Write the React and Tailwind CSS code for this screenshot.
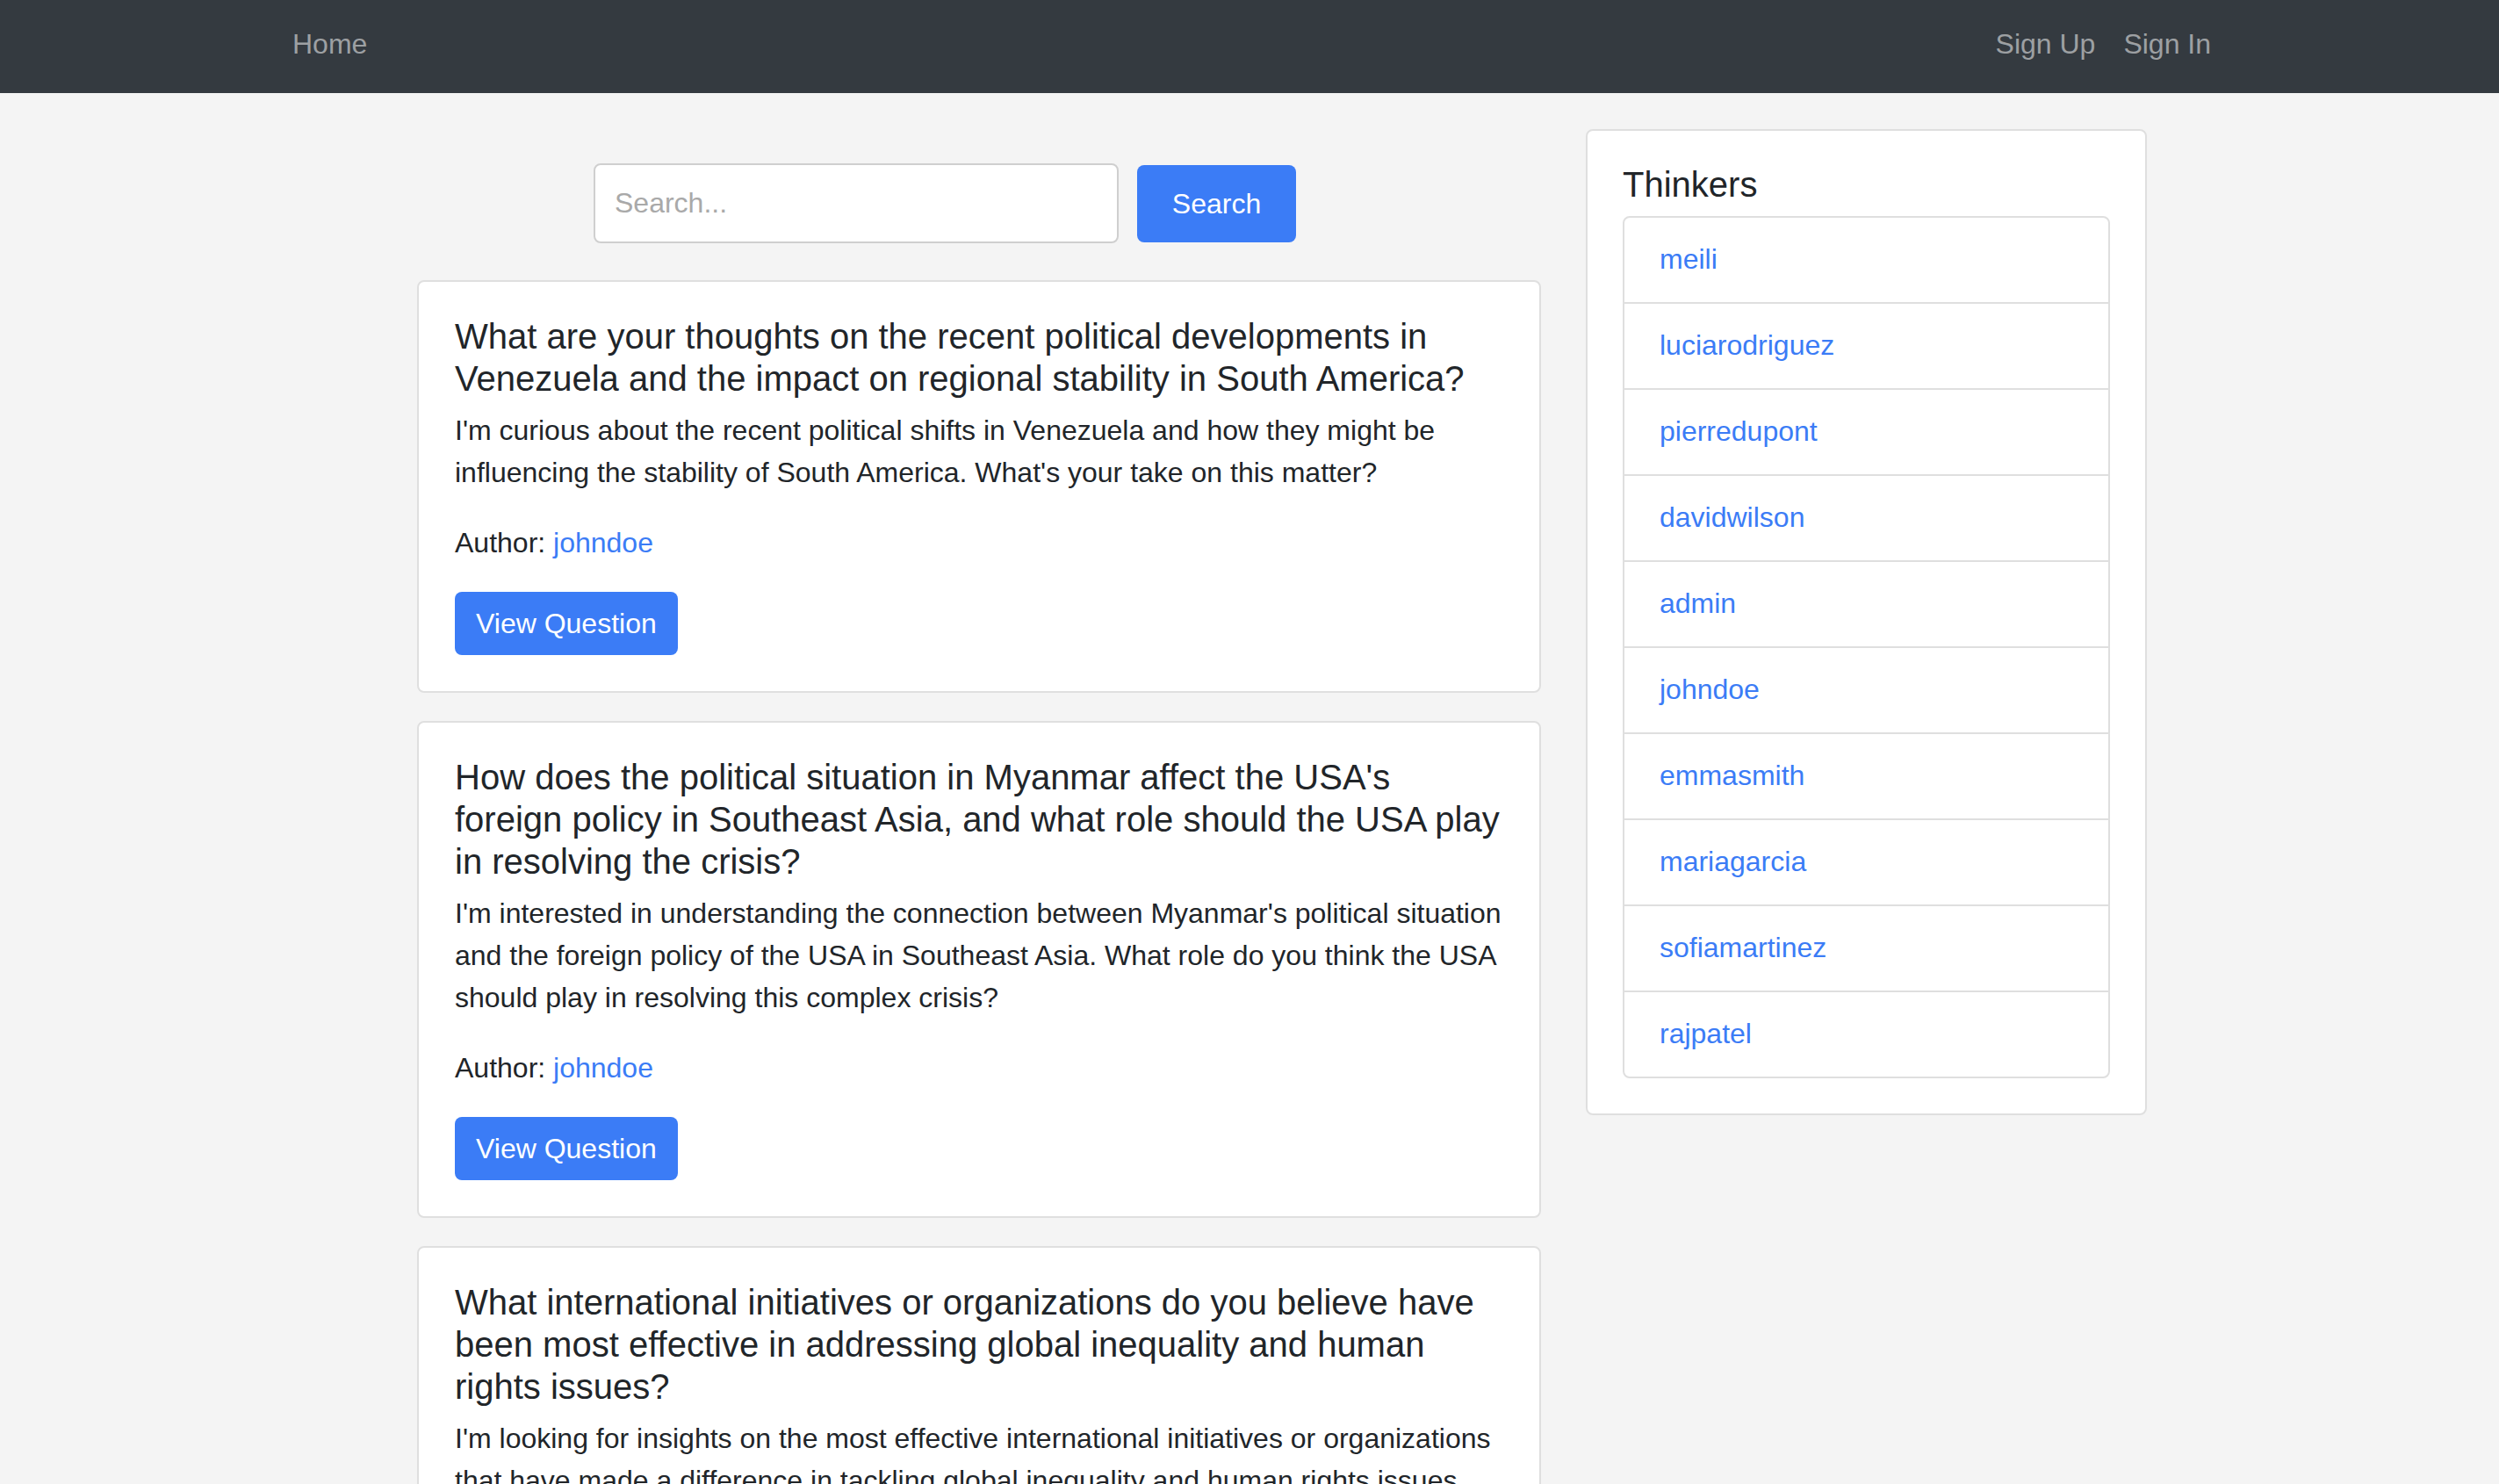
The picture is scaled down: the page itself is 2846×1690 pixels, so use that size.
import React from 'react';

const questions = [
    {
        id: 1,
        title: 'What are your thoughts on the recent political developments in Venezuela and the impact on regional stability in South America?',
        body: "I'm curious about the recent political shifts in Venezuela and how they might be influencing the stability of South America. What's your take on this matter?",
        author: 'johndoe',
    },
    {
        id: 2,
        title: "How does the political situation in Myanmar affect the USA's foreign policy in Southeast Asia, and what role should the USA play in resolving the crisis?",
        body: "I'm interested in understanding the connection between Myanmar's political situation and the foreign policy of the USA in Southeast Asia. What role do you think the USA should play in resolving this complex crisis?",
        author: 'johndoe',
    },
    {
        id: 3,
        title: 'What international initiatives or organizations do you believe have been most effective in addressing global inequality and human rights issues?',
        body: "I'm looking for insights on the most effective international initiatives or organizations that have made a difference in tackling global inequality and human rights issues. Which ones do you think have had the greatest impact?",
        author: 'johndoe',
    },
];

const thinkers = [
    'meili',
    'luciarodriguez',
    'pierredupont',
    'davidwilson',
    'admin',
    'johndoe',
    'emmasmith',
    'mariagarcia',
    'sofiamartinez',
    'rajpatel',
];

const QuestionCard = ({ q }) => (
    <div className="mb-[32px] rounded-[8px] border-2 border-[#dfdfdf] bg-white pb-[41px] pl-[41px] pr-[40px] pt-[38px]">
        <h5 className="mb-[11px] text-[40px] leading-[48px]">{q.title}</h5>
        <p className="mb-[32px] text-[32px] leading-[48px]">{q.body}</p>
        <p className="mb-[32px] text-[32px] leading-[48px]">
            Author: <a href="#" className="text-[#3b7cf6]">{q.author}</a>
        </p>
        <button className="h-[72px] rounded-[8px] bg-[#3b7cf6] px-[24px] text-[32px] leading-[48px] text-white">
            View Question
        </button>
    </div>
);

export default function App() {
    return (
        <div className="min-h-screen bg-[#f4f4f4] font-['Liberation_Sans',Arial,sans-serif] text-[#212529]">
            <nav className="flex h-[106px] items-center justify-between bg-[#343a40] pb-[6px] pl-[317px] pr-[312px]">
                <a href="#" className="px-[16px] text-[32px] leading-[48px] text-[#9da0a3]">Home</a>
                <div className="flex">
                    <a href="#" className="px-[16px] text-[32px] leading-[48px] text-[#9da0a3]">Sign Up</a>
                    <a href="#" className="px-[16px] text-[32px] leading-[48px] text-[#9da0a3]">Sign In</a>
                </div>
            </nav>

            <main className="flex items-start gap-[51px] pl-[475px] pt-[41px]">
                <div className="w-[1280px]">
                    <form className="mb-[42px] ml-[201px] mt-[39px] flex items-center gap-[21px]" onSubmit={(e) => e.preventDefault()}>
                        <input
                            type="text"
                            placeholder="Search..."
                            className="h-[91px] w-[598px] rounded-[8px] border-2 border-[#cfcfcf] bg-white px-[22px] text-[32px] outline-none placeholder:text-[#a9a9a9]"
                        />
                        <button className="h-[88px] w-[181px] rounded-[8px] bg-[#3b7cf6] text-[32px] text-white">
                            Search
                        </button>
                    </form>

                    {questions.map((q) => (
                        <QuestionCard key={q.id} q={q} />
                    ))}
                </div>

                <aside className="w-[639px] rounded-[8px] border-2 border-[#dfdfdf] bg-white px-[40px] pb-[40px] pt-[37px]">
                    <h5 className="mb-[12px] text-[40px] leading-[48px]">Thinkers</h5>
                    <ul className="divide-y-2 divide-[#dfdfdf] rounded-[8px] border-2 border-[#dfdfdf]">
                        {thinkers.map((name) => (
                            <li key={name} className="px-[40px] pb-[25px] pt-[23px] text-[32px] leading-[48px]">
                                <a href="#" className="text-[#3b7cf6]">{name}</a>
                            </li>
                        ))}
                    </ul>
                </aside>
            </main>
        </div>
    );
}
